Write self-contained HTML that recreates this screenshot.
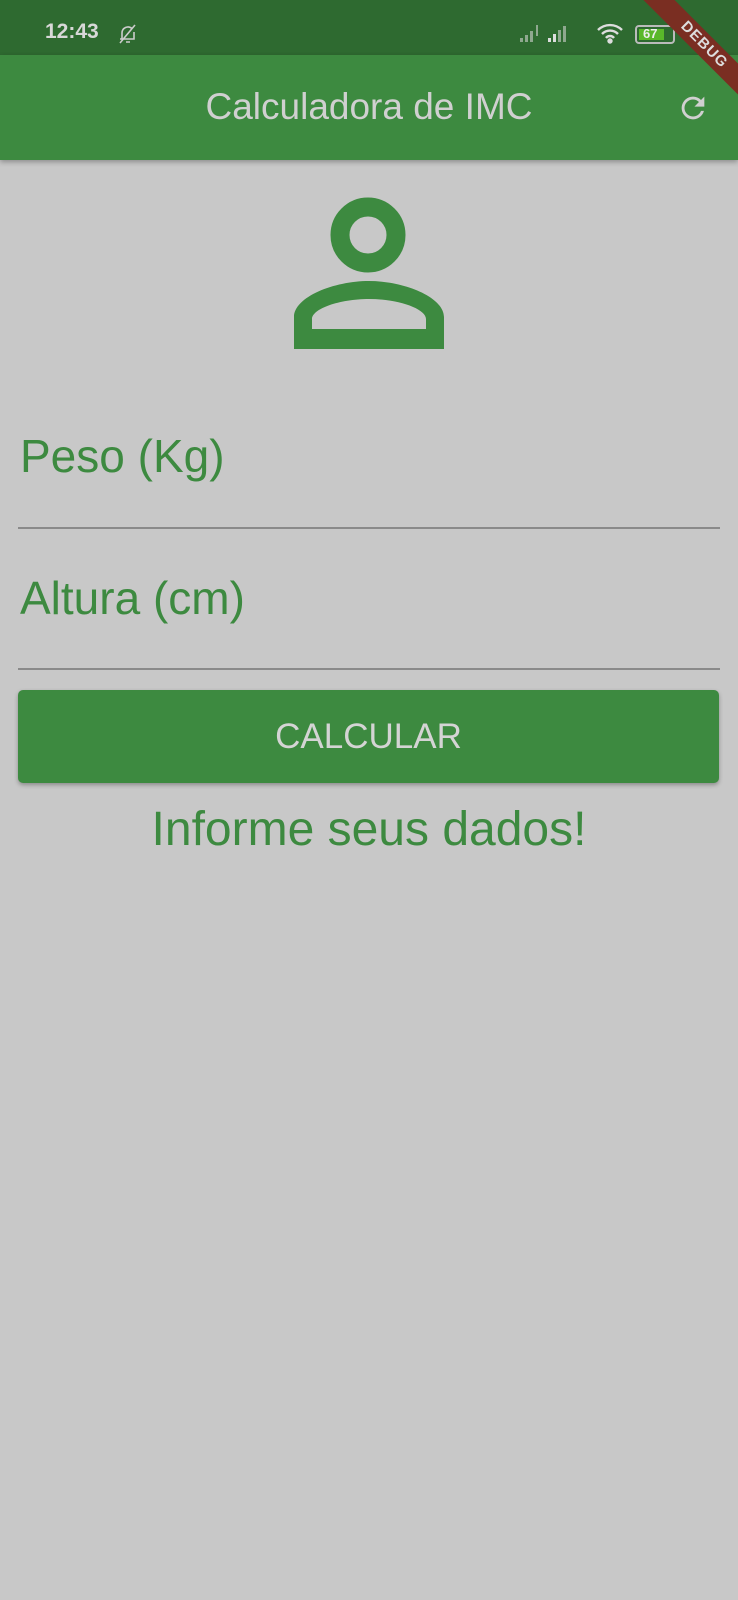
<!DOCTYPE html>
<html><head><meta charset="utf-8"><style>
*{margin:0;padding:0;box-sizing:border-box}
body{width:738px;height:1600px;background:#c8c8c8;position:relative;overflow:hidden;font-family:"Liberation Sans",sans-serif}
.sb{position:absolute;left:0;top:0;width:738px;height:55px;background:#2e6a30}
.ab{position:absolute;left:0;top:55px;width:738px;height:105px;background:#3d8a40;box-shadow:0 2px 5px rgba(0,0,0,.3)}
.t{position:absolute;color:#d0d0d0}
.g{position:absolute;color:#3d8a40;white-space:nowrap}
.line{position:absolute;left:18px;width:702px;height:2px;background:#8a8a8a}
.btn{position:absolute;left:18px;top:690px;width:701px;height:93px;background:#3d8a40;border-radius:5px;box-shadow:0 2px 4px rgba(0,0,0,.3);color:#d4d4d4;font-size:35px;text-align:center;line-height:93px}
.banner{position:absolute;left:604px;top:34px;width:200px;height:22px;background:#7a2e22;transform:rotate(45deg);color:#ddd;font-size:15px;font-weight:bold;text-align:center;line-height:22px;letter-spacing:1px}
</style></head><body>
<div class="sb"></div>
<div class="t" style="left:45px;top:20px;font-size:21px;font-weight:bold;color:#d8d8d8">12:43</div>
<svg style="position:absolute;left:116px;top:22px" width="24" height="24" viewBox="0 0 24 24" fill="none" stroke="#ccc" stroke-width="1.6"><path d="M6 17V11a6 6 0 0 1 10-4.5M18 10v7H4M10 20h4M4 21L19 3"/></svg>
<svg style="position:absolute;left:518px;top:22px" width="70" height="22" viewBox="0 0 70 22"><g fill="#8fa88f"><rect x="2" y="16" width="3" height="4"/><rect x="7" y="13" width="3" height="7"/><rect x="12" y="9" width="3" height="11"/><rect x="18" y="3" width="2" height="11"/></g><g fill="#ddd"><rect x="30" y="16" width="3" height="4"/><rect x="35" y="12" width="3" height="8"/></g><g fill="#8fa88f"><rect x="40" y="8" width="3" height="12"/><rect x="45" y="4" width="3" height="16"/></g></svg>
<svg style="position:absolute;left:596px;top:22px" width="28" height="22" viewBox="0 0 28 22" fill="none" stroke="#ddd" stroke-width="2.4"><path d="M2 8a17 17 0 0 1 24 0M6 12a11 11 0 0 1 16 0M10 16a5 5 0 0 1 8 0"/><circle cx="14" cy="19" r="1.5" fill="#ddd"/></svg>
<div style="position:absolute;left:635px;top:25px;width:40px;height:19px;border:2px solid #bbb;border-radius:4px"><div style="position:absolute;left:2px;top:2px;width:25px;height:11px;background:#5ab82a"></div><div style="position:absolute;left:6px;top:-1px;font-size:13px;color:#eee;font-weight:bold">67</div></div>
<div class="ab"></div>
<div class="t" style="left:0;width:738px;text-align:center;top:86px;font-size:37px">Calculadora de IMC</div>
<svg style="position:absolute;left:676px;top:91px" width="34" height="34" viewBox="0 0 24 24"><path fill="#d0d0d0" d="M17.65 6.35A7.96 7.96 0 0 0 12 4a8 8 0 1 0 7.73 10h-2.08A6 6 0 1 1 12 6c1.66 0 3.140.69 4.22 1.78L13 11h7V4l-2.35 2.35z"/></svg>
<div class="banner">DEBUG</div>
<svg style="position:absolute;left:294px;top:197px" width="150" height="152" viewBox="0 0 150 152">
<circle cx="74" cy="38" r="28" fill="none" stroke="#3d8a40" stroke-width="19"/>
<path fill="#3d8a40" fill-rule="evenodd" d="M0 152V120C0 100 40 84 75 84S150 100 150 120V152Z M18 132V122C18 112 45 102 75 102S132 112 132 122V132Z"/>
</svg>
<div class="g" style="left:20px;top:429px;font-size:46px">Peso (Kg)</div>
<div class="line" style="top:527px"></div>
<div class="g" style="left:20px;top:571px;font-size:46px">Altura (cm)</div>
<div class="line" style="top:668px"></div>
<div class="btn">CALCULAR</div>
<div class="g" style="left:0;width:738px;text-align:center;top:802px;font-size:48px">Informe seus dados!</div>
</body></html>
